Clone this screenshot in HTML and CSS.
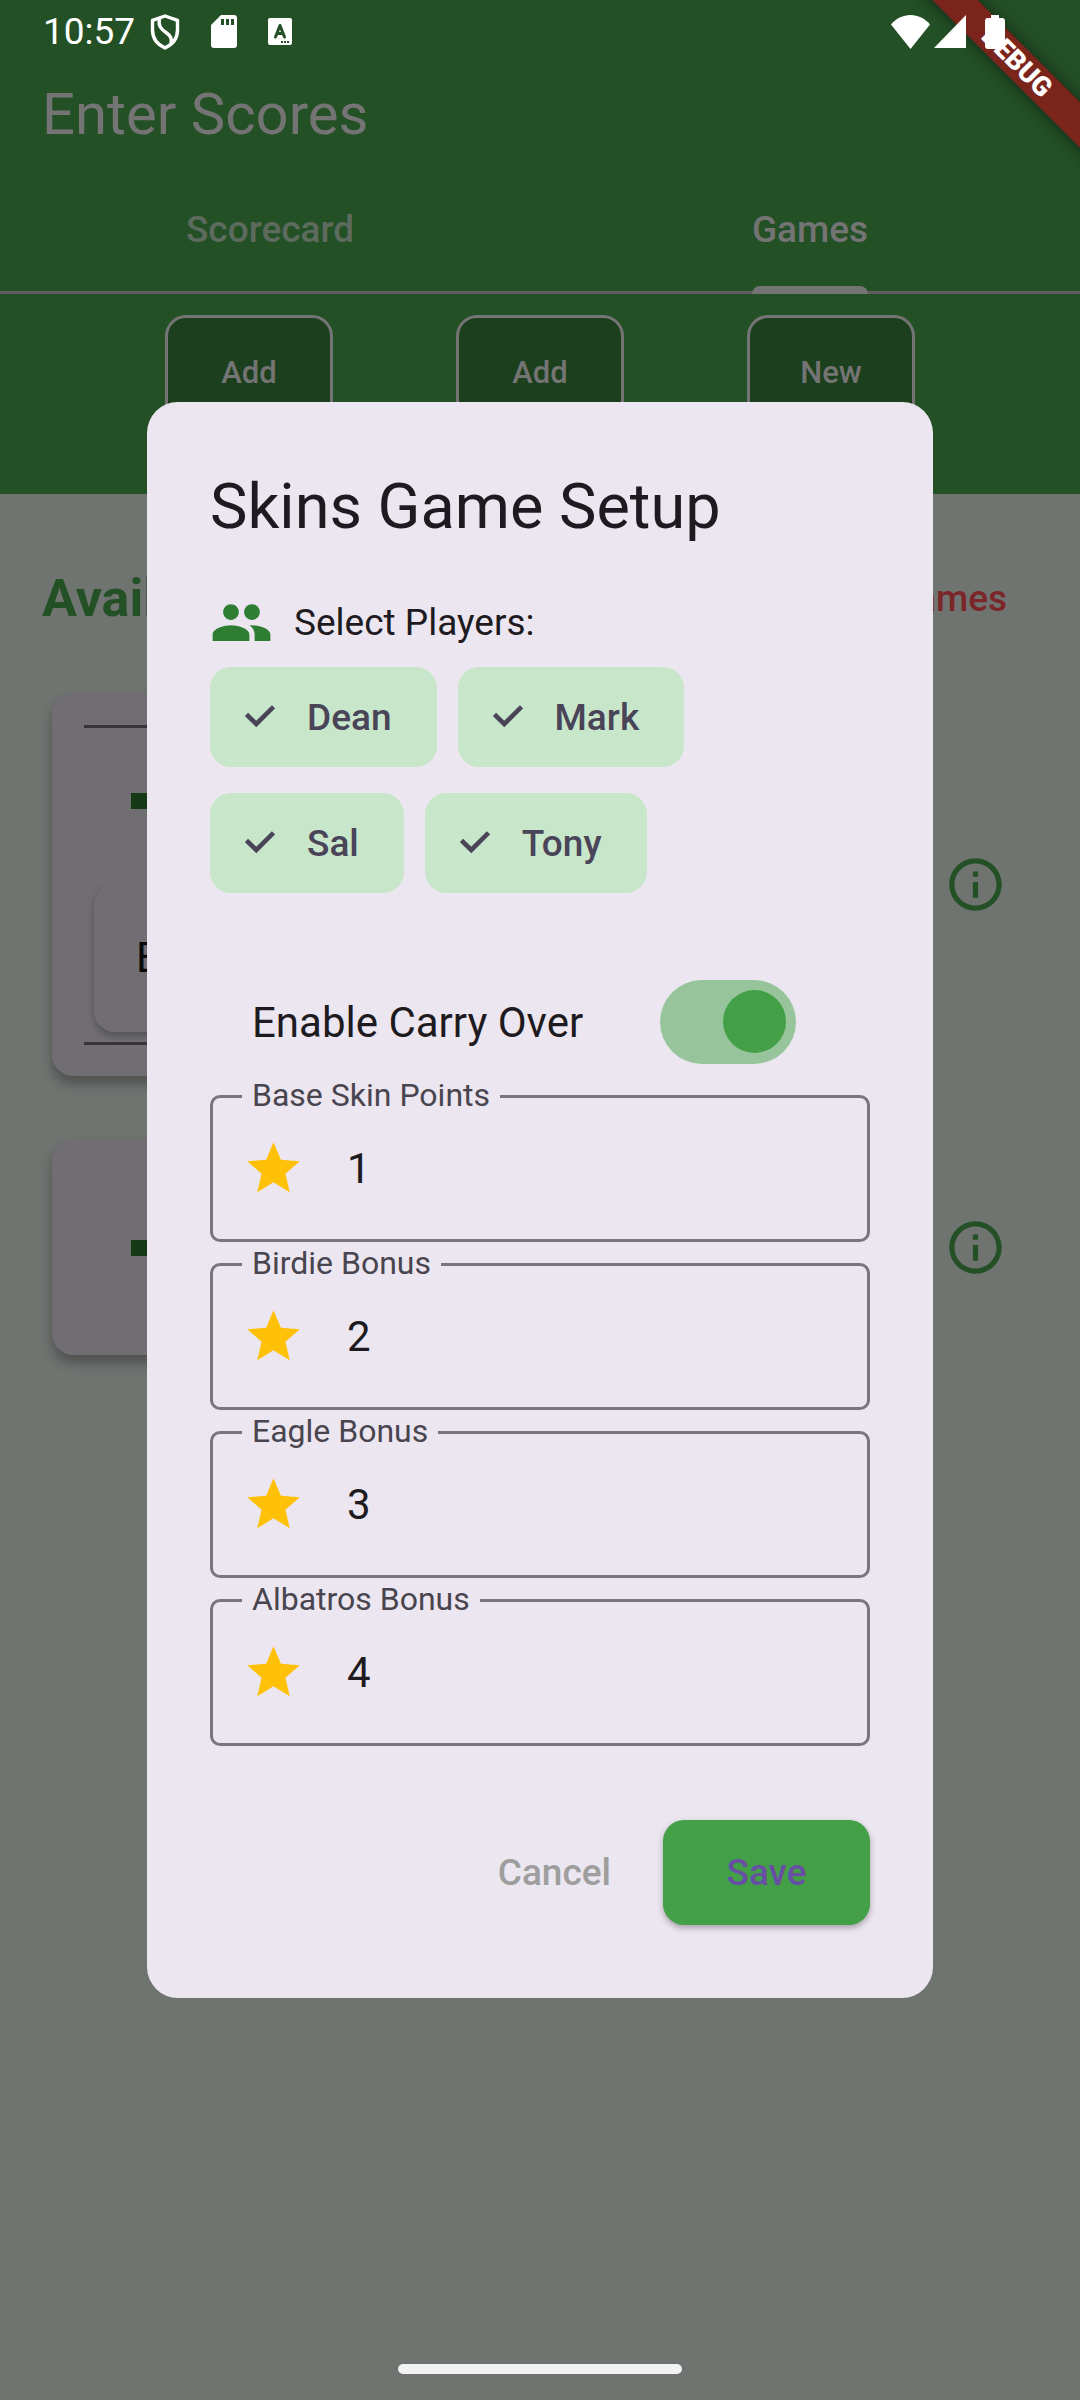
FILE: index.html
```html
<!DOCTYPE html>
<html lang="en">
<head>
<meta charset="utf-8">
<meta name="viewport" content="width=device-width, initial-scale=1">
<title>Enter Scores</title>
<link rel="stylesheet" href="styles.css">
</head>
<body>
<svg class="defs" aria-hidden="true">
  <symbol id="star" viewBox="0 0 24 24"><path d="M12 17.27 18.18 21l-1.64-7.03L22 9.24l-7.19-.61L12 2 9.19 8.63 2 9.24l5.46 4.73L5.82 21z"/></symbol>
  <symbol id="check" viewBox="0 0 30 24"><path d="M1.500 9.500 11.300 19 28.500 1.800" fill="none" stroke="currentColor" stroke-width="4.600"/></symbol>
  <symbol id="info" viewBox="0 0 24 24"><path d="M11 7h2v2h-2zm0 4h2v6h-2zm1-9C6.480 2 2 6.480 2 12s4.480 10 10 10 10-4.480 10-10S17.520 2 12 2zm0 18c-4.410 0-8-3.590-8-8s3.590-8 8-8 8 3.590 8 8-3.590 8-8 8z"/></symbol>
</svg>

<div class="status-bar">
  <span class="status-time">10:57</span>
  <span class="status-icons">
    <svg width="30" height="36" viewBox="0 0 30 36" fill="none" stroke="#fff" stroke-width="3.400" stroke-linejoin="round"><path d="M15 2 2.500 6.300V16c0 8 5 14.500 12.500 18 7.500-3.500 12.500-10 12.500-18V6.300z"/><path d="M9.500 4.500C8 12 11 15 16 18.500c5 3.500 6 6 5 11"/></svg>
    <svg width="26" height="33" viewBox="0 0 26 33"><path fill="#fff" fill-rule="evenodd" d="M10 0h13a3 3 0 0 1 3 3v27a3 3 0 0 1-3 3H3a3 3 0 0 1-3-3V10zm0 4v6h3V4zm5 0v6h3V4zm5 0v6h3V4z"/></svg>
    <svg width="24" height="27" viewBox="0 0 24 27"><rect width="24" height="27" rx="2" fill="#fff"/><path d="M7.500 19 12 7.500 16.500 19M9 15.500h6" fill="none" stroke="#245026" stroke-width="3" stroke-linecap="round" stroke-linejoin="round"/><path fill="#245026" d="M13 23h2v2h-2zm3 0h2v2h-2zm3 0h2v2h-2z"/></svg>
  </span>
  <span class="status-signal">
    <svg width="39" height="34" viewBox="0 0 39 34"><path fill="#fff" d="M19.500 34 0 9.500C5 3.500 12 0 19.500 0S34 3.500 39 9.500z"/></svg>
    <svg width="32" height="33" viewBox="0 0 32 33"><path fill="#fff" d="M32 0v33H0z"/></svg>
    <svg class="battery" width="20" height="34" viewBox="0 0 20 34"><path fill="#fff" d="M6 0h8v3h3a3 3 0 0 1 3 3v25a3 3 0 0 1-3 3H3a3 3 0 0 1-3-3V6a3 3 0 0 1 3-3h3z"/></svg>
  </span>
</div>
<div class="debug-corner"><div class="debug-ribbon">DEBUG</div></div>

<header class="app-bar">
  <h1 class="app-title">Enter Scores</h1>
  <nav class="tabs">
    <a class="tab" href="#scorecard"><span class="tab-label">Scorecard</span></a>
    <a class="tab tab-active" href="#games" aria-current="page"><span class="tab-label">Games</span></a>
  </nav>
  <div class="actions">
    <button class="action" type="button">Add</button>
    <button class="action" type="button">Add</button>
    <button class="action" type="button">New</button>
  </div>
</header>

<main class="content">
  <div class="heading-row">
    <h2 class="heading">Available</h2>
    <button class="games-link" type="button">Games</button>
  </div>
  <section class="game">
    <div class="card">
      <div class="panel">
        <div class="panel-head"><svg class="dash" viewBox="0 0 42 16"><rect width="42" height="16"/></svg></div>
        <div class="entry">E</div>
      </div>
    </div>
    <button class="info" type="button" aria-label="Game info"><svg class="icon"><use href="#info"/></svg></button>
  </section>
  <section class="game">
    <div class="card card-short"><svg class="dash" viewBox="0 0 42 16"><rect width="42" height="16"/></svg></div>
    <button class="info" type="button" aria-label="Game info"><svg class="icon"><use href="#info"/></svg></button>
  </section>
</main>

<div class="overlay">
  <form class="dialog" role="dialog" aria-labelledby="dialog-title">
    <h2 class="dialog-title" id="dialog-title">Skins Game Setup</h2>
    <div class="select-row">
      <svg class="icon icon-people" viewBox="0 0 24 24"><path d="M16 11c1.660 0 2.990-1.340 2.990-3S17.660 5 16 5s-3 1.340-3 3 1.340 3 3 3zm-8 0c1.660 0 2.990-1.340 2.990-3S9.660 5 8 5 5 6.340 5 8s1.340 3 3 3zm0 2c-2.330 0-7 1.170-7 3.500V19h14v-2.500c0-2.330-4.670-3.500-7-3.500zm8 0c-.290 0-.620.020-.970.050 1.160.840 1.970 1.970 1.970 3.450V19h6v-2.500c0-2.330-4.670-3.500-7-3.500z"/></svg>
      <span>Select Players:</span>
    </div>
    <div class="chips">
      <label class="chip"><input class="chip-input" type="checkbox" checked><svg class="chip-check"><use href="#check"/></svg>Dean</label>
      <label class="chip"><input class="chip-input" type="checkbox" checked><svg class="chip-check"><use href="#check"/></svg>Mark</label>
      <label class="chip"><input class="chip-input" type="checkbox" checked><svg class="chip-check"><use href="#check"/></svg>Sal</label>
      <label class="chip"><input class="chip-input" type="checkbox" checked><svg class="chip-check"><use href="#check"/></svg>Tony</label>
    </div>
    <div class="carry">
      <label for="carry">Enable Carry Over</label>
      <input class="switch" id="carry" type="checkbox" role="switch" checked>
    </div>
    <div class="fields">
      <div class="field">
        <label class="field-label" for="base">Base Skin Points</label>
        <svg class="icon icon-star"><use href="#star"/></svg>
        <input class="field-input" id="base" type="text" inputmode="numeric" value="1">
      </div>
      <div class="field">
        <label class="field-label" for="birdie">Birdie Bonus</label>
        <svg class="icon icon-star"><use href="#star"/></svg>
        <input class="field-input" id="birdie" type="text" inputmode="numeric" value="2">
      </div>
      <div class="field">
        <label class="field-label" for="eagle">Eagle Bonus</label>
        <svg class="icon icon-star"><use href="#star"/></svg>
        <input class="field-input" id="eagle" type="text" inputmode="numeric" value="3">
      </div>
      <div class="field">
        <label class="field-label" for="albatros">Albatros Bonus</label>
        <svg class="icon icon-star"><use href="#star"/></svg>
        <input class="field-input" id="albatros" type="text" inputmode="numeric" value="4">
      </div>
    </div>
    <div class="dialog-actions">
      <button class="cancel" type="button">Cancel</button>
      <button class="save" type="submit">Save</button>
    </div>
  </form>
</div>
<div class="home-pill"></div>
</body>
</html>
```
FILE: styles.css
```css
* { box-sizing: border-box; }

body {
  margin: 0;
  min-height: 100vh;
  background: #707471;
  color: #1d1b20;
  font-family: Roboto, "Noto Sans", sans-serif;
  font-size: 37px;
}

button {
  border: 0;
  padding: 0;
  background: none;
  font: inherit;
  font-weight: 500;
}

h1, h2 { margin: 0; font-weight: 400; }
svg { flex: none; display: block; }

.defs { position: absolute; width: 0; height: 0; }
.icon { width: 63px; height: 63px; fill: currentColor; }

/* System bars */
.status-bar {
  position: relative;
  z-index: 3;
  display: flex;
  align-items: center;
  height: 63px;
  padding: 0 75px 0 43px;
  color: #fff;
}
.status-time { width: 107px; }
.status-icons { display: flex; align-items: center; gap: 31px; }
.status-signal { display: flex; gap: 4px; margin-left: auto; }
.battery { margin-left: 15px; }

.debug-corner {
  position: absolute;
  z-index: 2;
  top: 0;
  right: 0;
  width: 180px;
  height: 180px;
  overflow: hidden;
}
.debug-ribbon {
  position: absolute;
  top: 46px;
  right: -87px;
  width: 300px;
  background: #7b241c;
  box-shadow: 0 0 18px rgba(0, 0, 0, .5);
  color: #fff;
  font-size: 27px;
  font-weight: 900;
  line-height: 32px;
  text-align: center;
  transform: rotate(45deg);
}

.home-pill {
  position: fixed;
  z-index: 5;
  bottom: 26px;
  left: 50%;
  width: 284px;
  height: 10px;
  border-radius: 5px;
  background: #f3f3f3;
  transform: translateX(-50%);
}

/* App bar */
.app-bar {
  margin-top: -63px;
  padding: 63px 0 21px;
  background: #245026;
  color: #747474;
}
.app-title { padding: 0 42px; font-size: 58px; line-height: 102px; }
.tabs {
  display: grid;
  grid-template-columns: 1fr 1fr;
  height: 129px;
  box-shadow: inset 0 -3px #5f5d61;
}
.tab {
  display: flex;
  justify-content: center;
  color: #5d6b5e;
  font-weight: 500;
  text-decoration: none;
}
.tab-active { color: #747474; }
.tab-label { display: flex; align-items: center; position: relative; }
.tab-active .tab-label::after {
  content: "";
  position: absolute;
  right: 0;
  bottom: 0;
  left: 0;
  height: 8px;
  border-radius: 8px 8px 0 0;
  background: #747474;
}
.actions { display: flex; justify-content: center; gap: 123px; padding-top: 21px; }
.action {
  display: flex;
  justify-content: center;
  width: 168px;
  height: 158px;
  padding-top: 36px;
  border: 3px solid #747474;
  border-radius: 21px;
  background: #1c401d;
  color: #747474;
  font-size: 31px;
}

/* Games list */
.content { padding: 42px 73px 0 42px; }
.heading-row {
  display: flex;
  align-items: center;
  justify-content: space-between;
  height: 125px;
  margin-bottom: 32px;
}
.heading { color: #245026; font-size: 52px; font-weight: 700; }
.games-link { color: #7b2628; }
.game {
  display: flex;
  align-items: center;
  gap: 42px;
  margin: 0 0 63px 10px;
}
.card {
  flex: 1;
  padding: 32px 32px 31px;
  border-radius: 21px;
  background: #706e73;
  box-shadow: 0 8px 12px rgba(0, 0, 0, .3);
}
.card-short { display: flex; align-items: center; height: 216px; padding-left: 79px; }
.panel { padding-bottom: 10px; border: solid #38353a; border-width: 3px 0; }
.panel-head { display: flex; align-items: center; height: 146px; padding-left: 47px; }
.dash { width: 42px; height: 16px; fill: #163a16; }
.entry {
  margin: 10px 10px 0;
  padding: 0 42px;
  border-radius: 21px;
  box-shadow: 0 4px 7px rgba(0, 0, 0, .25);
  color: #0b0b0b;
  font-size: 42px;
  line-height: 148px;
}
.info { color: #245026; }

/* Dialog */
.overlay {
  position: fixed;
  z-index: 4;
  inset: 0;
  display: flex;
  align-items: center;
  padding: 0 147px;
}
.dialog {
  flex: 1;
  min-width: 0;
  padding: 63px 63px 73px;
  border-radius: 31px;
  background: #ece6f0;
}
.dialog-title { margin-bottom: 42px; font-size: 63px; line-height: 84px; }
.select-row { display: flex; align-items: center; gap: 21px; }
.icon-people { color: #2e7d32; }

.chips { display: flex; flex-wrap: wrap; gap: 26px 21px; margin: 13px 0 87px; }
.chip {
  position: relative;
  display: flex;
  align-items: center;
  gap: 32px;
  height: 100px;
  padding: 0 45px 0 35px;
  border-radius: 21px;
  background: #c8e6c9;
  color: #4a4458;
  font-weight: 500;
}
.chip-input {
  position: absolute;
  inset: 0;
  margin: 0;
  appearance: none;
}
.chip-check { width: 30px; height: 24px; }

.carry {
  display: flex;
  align-items: center;
  justify-content: space-between;
  margin-bottom: 31px;
  padding: 0 74px 0 42px;
  font-size: 42px;
}
.switch {
  width: 136px;
  height: 84px;
  margin: 0;
  padding: 10px;
  border-radius: 42px;
  background: #97c49a;
  appearance: none;
}
.switch::before {
  content: "";
  display: block;
  width: 63px;
  height: 63px;
  border-radius: 50%;
  background: #43a047;
}
.switch:checked::before { margin-left: auto; }

.fields { display: grid; grid-template-columns: minmax(0, 1fr); gap: 21px; }
.field {
  position: relative;
  display: flex;
  align-items: center;
  gap: 42px;
  height: 147px;
  padding: 0 29px;
  border: 3px solid #79747e;
  border-radius: 10px;
}
.field-label {
  position: absolute;
  top: -21px;
  left: 29px;
  padding: 0 10px;
  background: #ece6f0;
  color: #49454f;
  font-size: 32px;
  line-height: 36px;
}
.icon-star { color: #ffc107; }
.field-input {
  flex: 1;
  min-width: 0;
  padding: 0;
  border: 0;
  outline: 0;
  background: none;
  color: #1d1b20;
  font: inherit;
  font-size: 42px;
}

.dialog-actions { display: flex; justify-content: flex-end; gap: 52px; margin-top: 74px; }
.cancel { color: #9e9e9e; }
.save {
  width: 207px;
  height: 105px;
  border-radius: 21px;
  background: #43a047;
  box-shadow: 0 3px 6px rgba(0, 0, 0, .3);
  color: #6750a4;
}
```
